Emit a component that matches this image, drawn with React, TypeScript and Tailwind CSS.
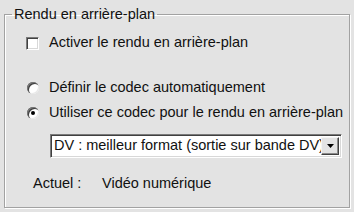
import { useState } from 'react';

function Checkbox({ checked }: { checked: boolean }) {
  return (
    <span className="inline-flex w-[13px] h-[13px] shrink-0 items-center justify-center bg-white border border-t-[#7a7a7a] border-l-[#7a7a7a] border-r-white border-b-white shadow-[inset_1px_1px_0_#404040,inset_-1px_-1px_0_#d8d8d8]">
      {checked && <span className="text-[10px] leading-none">✓</span>}
    </span>
  );
}

function Radio({ checked }: { checked: boolean }) {
  return (
    <span className="relative inline-flex w-[12px] h-[12px] shrink-0 items-center justify-center rounded-full bg-white shadow-[inset_1px_1px_0_#7a7a7a,inset_2px_2px_0_#404040,inset_-1px_-1px_0_#e8e8e8]">
      {checked && <span className="w-[4px] h-[4px] rounded-full bg-black" />}
    </span>
  );
}

export default function App() {
  const [mode] = useState<'auto' | 'custom'>('custom');

  return (
    <div
      className="w-[354px] h-[212px] bg-[#e3e3e3] pt-[6px] pl-[4px] pr-[4px] text-[14.5px] text-[#111]"
      style={{ fontFamily: '"Liberation Sans", Arial, sans-serif' }}
    >
      <fieldset className="h-[202px] border border-[#a2a2a2] shadow-[1px_1px_0_#fff,inset_1px_1px_0_#fff]">
        <legend className="ml-[7px] px-[2px] leading-[16px]">Rendu en arrière-plan</legend>

        <div className="pl-[20px] pr-[4px]">
          {/* Checkbox */}
          <label className="flex items-center gap-[10px] mt-[13px] h-[16px] pl-[1px]">
            <Checkbox checked={false} />
            <span>Activer le rendu en arrière-plan</span>
          </label>

          {/* Codec choice */}
          <div className="mt-[29px] flex flex-col gap-[9px]">
            <label className="flex items-center gap-[10px] h-[16px] pl-[2px]">
              <Radio checked={mode === 'auto'} />
              <span>Définir le codec automatiquement</span>
            </label>
            <label className="flex items-center gap-[10px] h-[16px] pl-[2px]">
              <Radio checked={mode === 'custom'} />
              <span className="whitespace-nowrap">Utiliser ce codec pour le rendu en arrière-plan</span>
            </label>
          </div>

          {/* Dropdown */}
          <div className="ml-[25px] mt-[13px] w-[292px] h-[24px] flex items-center bg-white border border-t-[#7a7a7a] border-l-[#7a7a7a] border-r-white border-b-white shadow-[inset_1px_1px_0_#404040,inset_-1px_-1px_0_#d8d8d8] p-[2px]">
            <span className="flex-1 min-w-0 overflow-hidden whitespace-nowrap pl-[1px]">DV : meilleur format (sortie sur bande DV)</span>
            <span className="w-[18px] h-[18px] shrink-0 flex items-center justify-center bg-[#e3e3e3] border border-t-[#f4f4f4] border-l-[#f4f4f4] border-r-[#404040] border-b-[#404040] shadow-[inset_-1px_-1px_0_#8a8a8a]">
              <svg width="7" height="4" viewBox="0 0 7 4">
                <path d="M0 0h7L3.5 4z" fill="#000" />
              </svg>
            </span>
          </div>

          {/* Current */}
          <div className="flex mt-[18px] ml-[8px] h-[16px] items-center">
            <span className="w-[69px]">Actuel :</span>
            <span>Vidéo numérique</span>
          </div>
        </div>
      </fieldset>
    </div>
  );
}
